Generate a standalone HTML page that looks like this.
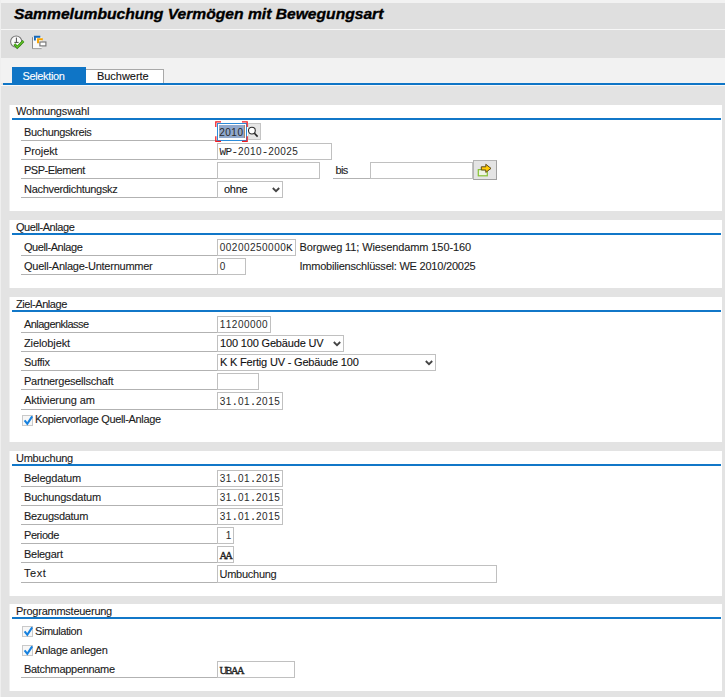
<!DOCTYPE html>
<html><head><meta charset="utf-8"><title>Sammelumbuchung</title>
<style>
*{box-sizing:border-box;margin:0;padding:0}
html,body{width:725px;height:697px;overflow:hidden}
body{position:relative;background:#e3e3e3;font-family:"Liberation Sans",sans-serif;font-size:11px;color:#1c1c1c;-webkit-text-stroke-width:0.1px}
.abs{position:absolute}
#topband{left:0;top:0;width:725px;height:3px;background:#f2f2f2}
#titlebar{left:0;top:3px;width:725px;height:26px;background:#dfdfdf}
#title{left:14.3px;top:6px;font:italic bold 14.5px "Liberation Sans",sans-serif;color:#000;-webkit-text-stroke:0.35px #000;white-space:nowrap;transform-origin:0 0;transform:scaleX(1.078)}
#sep{left:0;top:29px;width:725px;height:1px;background:#f7f7f7}
#toolbar{left:0;top:30px;width:725px;height:28px;background:#dedede}
#tabarea{left:0;top:58px;width:725px;height:25px;background:#f2f2f2}
#leftband{left:0;top:0;width:1px;height:697px;background:#efefef}
#tab1{left:12px;top:67px;width:74px;height:16px;background:#0f75c6;color:#fff;padding-left:10.5px;line-height:19px;white-space:nowrap}
#tab2{left:86px;top:69px;width:78px;height:14px;background:#fff;border-top:1px solid #a9a9a9;border-right:1px solid #a9a9a9;padding-left:11px;line-height:12.5px;color:#111;white-space:nowrap}
#tabline{left:3px;top:83px;width:722px;height:2px;background:#0f75c6}
.box{position:absolute;background:#fff;left:10px;width:712px;box-shadow:-1px 0 0 #f0f0f0}
.hd{position:absolute;left:6px;top:0;line-height:14px;white-space:nowrap}
.bl{position:absolute;left:1.5px;right:1.5px;top:13px;height:2px;background:#1177c8}
.lbl{position:absolute;left:21px;width:196px;height:19px;border-bottom:1px solid #b2b2b2;padding-left:3px;line-height:21.8px;white-space:nowrap;overflow:hidden}
.fld{position:absolute;left:217px;height:17px;border:1px solid #c0c0c0;background:#fff;font:11px "Liberation Mono",monospace;letter-spacing:-0.55px;padding-left:1.5px;line-height:17px;white-space:pre;color:#222;overflow:hidden;-webkit-text-stroke-width:0}
.fld.s{font:11px "Liberation Sans",sans-serif;letter-spacing:0;line-height:15.6px;-webkit-text-stroke-width:0.1px;color:#1c1c1c}
.sel{position:absolute;left:217px;height:17px;border:1px solid #c0c0c0;background:#fff;padding-left:2px;line-height:15.6px;white-space:nowrap;color:#111}
.sel svg{position:absolute;right:2px;top:4.5px}
.m{}
.d{display:inline-block;width:6.05px;text-align:center;font:normal 10px "Liberation Sans",sans-serif;letter-spacing:0;color:#2a2a2a}
.cs{display:inline-block;position:relative;top:0.6px;width:5.8px;text-align:center;font:normal 10.5px "Liberation Serif",serif;letter-spacing:0;-webkit-text-stroke:0.35px #222}
.txt{position:absolute;white-space:nowrap;line-height:21.8px;height:19px}
.cb{position:absolute;left:22px;width:11px;height:11px;border:1px solid #c9c9c9;background:#f7f7f7}
.cb svg{position:absolute;left:0;top:-1px}
</style></head><body>
<div id="topband" class="abs"></div>
<div id="titlebar" class="abs"></div>
<div id="sep" class="abs"></div>
<div id="toolbar" class="abs"></div>
<div id="tabarea" class="abs"></div>
<div id="leftband" class="abs"></div>
<div id="title" class="abs">Sammelumbuchung Vermögen mit Bewegungsart</div>

<div id="tab1" class="abs"><span style="letter-spacing:-0.363px;">Selektion</span></div>
<div id="tab2" class="abs"><span style="letter-spacing:-0.043px;">Buchwerte</span></div>
<div id="tabline" class="abs"></div><div class="abs" style="left:1px;top:85px;width:724px;height:1px;background:#f8f8f8"></div>
<svg class="abs" style="left:8px;top:33px" width="20" height="18" viewBox="0 0 20 18">
<circle cx="8.2" cy="8.6" r="5.6" fill="#fafafa" stroke="#767676" stroke-width="1.05"/>
<path d="M8.4 4.6V9.4M6.4 9.4H10.6" stroke="#4a4a4a" stroke-width="1" fill="none"/>
<path d="M6.4 11.1L9.2 14.3L15.4 8" stroke="#2f7d10" stroke-width="2.6" fill="none"/>
<path d="M6.4 11.1L9.2 14.3L15.4 8" stroke="#5fc326" stroke-width="1.3" fill="none"/>
</svg>
<svg class="abs" style="left:30px;top:34px" width="18" height="16" viewBox="0 0 18 16">
<path d="M2.5 3.2V14.6H11.6" fill="none" stroke="#8a8a8a" stroke-width="1"/>
<rect x="3" y="3.2" width="8.6" height="11" fill="#fafafa"/>
<path d="M4.9 6.4V2.7H10.3" fill="none" stroke="#1668b8" stroke-width="1.9"/>
<path d="M8 9.2V5.3H12.8" fill="none" stroke="#f5a200" stroke-width="1.9"/>
<rect x="9.9" y="8" width="6" height="3.9" fill="#fff" stroke="#757575" stroke-width="1.15"/>
</svg>
<div class="box" style="top:105px;height:106px"><div class="hd" style="top:-1px"><span style="letter-spacing:-0.151px;">Wohnungswahl</span></div><div class="bl"></div></div>
<div class="lbl" style="top:122px;height:19px"><span style="letter-spacing:-0.358px;">Buchungskreis</span></div>
<div class="lbl" style="top:141px;height:19px"><span style="letter-spacing:-0.107px;">Projekt</span></div>
<div class="lbl" style="top:160px;height:19px"><span style="letter-spacing:-0.476px;">PSP-Element</span></div>
<div class="lbl" style="top:179px;height:19px"><span style="letter-spacing:-0.309px;">Nachverdichtungskz</span></div>
<div class="box" style="top:220px;height:68px"><div class="hd" style="top:0px"><span style="letter-spacing:-0.441px;">Quell-Anlage</span></div><div class="bl"></div></div>
<div class="lbl" style="top:237px;height:19px"><span style="letter-spacing:-0.441px;">Quell-Anlage</span></div>
<div class="lbl" style="top:256px;height:19px"><span style="letter-spacing:-0.25px;">Quell-Anlage-Unternummer</span></div>
<div class="box" style="top:297px;height:145px"><div class="hd" style="top:0px"><span style="letter-spacing:-0.431px;">Ziel-Anlage</span></div><div class="bl"></div></div>
<div class="lbl" style="top:314px;height:19px"><span style="letter-spacing:-0.543px;">Anlagenklasse</span></div>
<div class="lbl" style="top:333px;height:19px"><span style="letter-spacing:-0.108px;">Zielobjekt</span></div>
<div class="lbl" style="top:352px;height:19px"><span style="letter-spacing:-0.285px;">Suffix</span></div>
<div class="lbl" style="top:371px;height:19px"><span style="letter-spacing:-0.256px;">Partnergesellschaft</span></div>
<div class="lbl" style="top:390px;height:20px"><span style="letter-spacing:-0.148px;">Aktivierung am</span></div>
<div class="box" style="top:451px;height:145px"><div class="hd" style="top:0px"><span style="letter-spacing:-0.259px;">Umbuchung</span></div><div class="bl"></div></div>
<div class="lbl" style="top:468px;height:19px"><span style="letter-spacing:-0.172px;">Belegdatum</span></div>
<div class="lbl" style="top:487px;height:19px"><span style="letter-spacing:-0.192px;">Buchungsdatum</span></div>
<div class="lbl" style="top:506px;height:19px"><span style="letter-spacing:-0.297px;">Bezugsdatum</span></div>
<div class="lbl" style="top:525px;height:19px"><span style="letter-spacing:-0.417px;">Periode</span></div>
<div class="lbl" style="top:544px;height:19px"><span style="letter-spacing:-0.286px;">Belegart</span></div>
<div class="lbl" style="top:563px;height:20px"><span style="letter-spacing:0.528px;">Text</span></div>
<div class="box" style="top:604px;height:87px"><div class="hd" style="top:0px"><span style="letter-spacing:-0.252px;">Programmsteuerung</span></div><div class="bl"></div></div>
<div class="lbl" style="top:659px;height:19px"><span style="letter-spacing:-0.307px;">Batchmappenname</span></div>
<div class="abs" style="left:216.5px;top:123px;width:30.5px;height:18px;border:1.5px solid #2c8bd9;background:#fff"></div>
<div class="abs" style="left:218.5px;top:124.7px;width:26px;height:13.5px;background:#90a8cc"></div>
<div class="abs" style="left:244px;top:124.7px;width:1px;height:13.5px;background:#a98a6a"></div>
<div class="abs" style="left:219px;top:124px;font:11px 'Liberation Mono',monospace;letter-spacing:-0.55px;line-height:18.4px;color:#111;white-space:pre;-webkit-text-stroke-width:0"><i class="d">2</i><i class="d">0</i><i class="d">1</i><i class="d">0</i></div>
<svg class="abs" style="left:213px;top:119px" width="38" height="26" viewBox="0 0 38 26"><path d="M2.8 8V2.9H8M29 2.9H34.2V8M34.2 17.2V22.3H29M8 22.3H2.8V17.2" fill="none" stroke="#f01c22" stroke-width="1.25"/></svg>
<div class="abs" style="left:248px;top:123px;width:13px;height:17px;background:#e6e6e6;border:1px solid #c4c4c4;border-left-color:#d8d8d8"></div>
<svg class="abs" style="left:247px;top:125px" width="13" height="14" viewBox="0 0 13 14"><circle cx="4.9" cy="5.6" r="3.4" fill="#fff" stroke="#2a2a2a" stroke-width="1.1"/><path d="M7.4 8.2L10.6 11.6" stroke="#222" stroke-width="1.6"/></svg>

<div class="fld " style="top:143px;width:115px;">WP-<i class="d">2</i><i class="d">0</i><i class="d">1</i><i class="d">0</i>-<i class="d">2</i><i class="d">0</i><i class="d">0</i><i class="d">2</i><i class="d">5</i></div>
<div class="fld " style="top:162px;width:103px;"></div>
<div class="txt" style="left:333px;top:160px;width:37px;border-bottom:1px solid #b2b2b2;padding-left:2.6px"><span style="letter-spacing:-0.688px;">bis</span></div>
<div class="fld " style="top:162px;width:103px;left:370px"></div>
<div class="abs" style="left:473px;top:160px;width:24px;height:20px;background:#e4e4e4;border:1px solid #b4b4b4;border-bottom-color:#a0a0a0;border-right-color:#a0a0a0"></div>
<svg class="abs" style="left:476px;top:162px" width="18" height="16" viewBox="0 0 18 16">
<rect x="2.3" y="7.6" width="9" height="6.2" fill="#eef4e4" stroke="#86c232" stroke-width="1.2"/>
<path d="M5.3 4.8H9.8V2.3L15 6.4L9.8 10.4V8H5.3Z" fill="#ffcb05" stroke="#5b4a1a" stroke-width="1"/>
</svg>
<div class="sel" style="top:181px;width:66px;padding-left:6px"><span style="letter-spacing:-0.246px;">ohne</span><svg width="8" height="6" viewBox="0 0 8 6"><path d="M0.8 1L4 4.2L7.2 1" fill="none" stroke="#444" stroke-width="1.8"/></svg></div>
<div class="fld " style="top:239px;width:79px;"><i class="d">0</i><i class="d">0</i><i class="d">2</i><i class="d">0</i><i class="d">0</i><i class="d">2</i><i class="d">5</i><i class="d">0</i><i class="d">0</i><i class="d">0</i><i class="d">0</i>K</div>
<div class="fld " style="top:258px;width:29px;"><i class="d">0</i></div>
<div class="txt" style="left:299.5px;top:237px"><span style="letter-spacing:-0.106px;">Borgweg 11; Wiesendamm 150-160</span></div>
<div class="txt" style="left:299.5px;top:256px"><span style="letter-spacing:-0.219px;">Immobilienschlüssel: WE 2010/20025</span></div>
<div class="fld " style="top:316px;width:54px;"><i class="d">1</i><i class="d">1</i><i class="d">2</i><i class="d">0</i><i class="d">0</i><i class="d">0</i><i class="d">0</i><i class="d">0</i></div>
<div class="sel" style="top:335px;width:127px;padding-left:2px"><span style="letter-spacing:-0.162px;">100 100 Gebäude UV</span><svg width="8" height="6" viewBox="0 0 8 6"><path d="M0.8 1L4 4.2L7.2 1" fill="none" stroke="#444" stroke-width="1.8"/></svg></div>
<div class="sel" style="top:354px;width:219px;padding-left:2px"><span style="letter-spacing:-0.188px;">K K Fertig UV - Gebäude 100</span><svg width="8" height="6" viewBox="0 0 8 6"><path d="M0.8 1L4 4.2L7.2 1" fill="none" stroke="#444" stroke-width="1.8"/></svg></div>
<div class="fld " style="top:373px;width:42px;"></div>
<div class="fld " style="top:392px;width:66px;height:18px;line-height:18px"><i class="d">3</i><i class="d">1</i>.<i class="d">0</i><i class="d">1</i>.<i class="d">2</i><i class="d">0</i><i class="d">1</i><i class="d">5</i></div>
<div class="cb" style="top:415px"><svg width="11" height="11" viewBox="0 0 11 11"><path d="M1.6 5.4L4.3 8.8L9.2 1.4" fill="none" stroke="#1781de" stroke-width="2.1"/></svg></div><div class="txt" style="left:35px;top:409px"><span style="letter-spacing:-0.336px;">Kopiervorlage Quell-Anlage</span></div>
<div class="fld " style="top:470px;width:66px;"><i class="d">3</i><i class="d">1</i>.<i class="d">0</i><i class="d">1</i>.<i class="d">2</i><i class="d">0</i><i class="d">1</i><i class="d">5</i></div>
<div class="fld " style="top:489px;width:66px;"><i class="d">3</i><i class="d">1</i>.<i class="d">0</i><i class="d">1</i>.<i class="d">2</i><i class="d">0</i><i class="d">1</i><i class="d">5</i></div>
<div class="fld " style="top:508px;width:66px;"><i class="d">3</i><i class="d">1</i>.<i class="d">0</i><i class="d">1</i>.<i class="d">2</i><i class="d">0</i><i class="d">1</i><i class="d">5</i></div>
<div class="fld " style="top:527px;width:17px;"> <i class="d">1</i></div>
<div class="fld " style="top:546px;width:17px;"><i class="cs">A</i><i class="cs">A</i></div>
<div class="fld s" style="top:565px;width:280px;height:18px;line-height:16.6px"><span style="letter-spacing:-0.259px;">Umbuchung</span></div>
<div class="cb" style="top:626px"><svg width="11" height="11" viewBox="0 0 11 11"><path d="M1.6 5.4L4.3 8.8L9.2 1.4" fill="none" stroke="#1781de" stroke-width="2.1"/></svg></div><div class="txt" style="left:35px;top:621px"><span style="letter-spacing:-0.446px;">Simulation</span></div>
<div class="cb" style="top:645px"><svg width="11" height="11" viewBox="0 0 11 11"><path d="M1.6 5.4L4.3 8.8L9.2 1.4" fill="none" stroke="#1781de" stroke-width="2.1"/></svg></div><div class="txt" style="left:35px;top:640px"><span style="letter-spacing:-0.283px;">Anlage anlegen</span></div>
<div class="fld " style="top:661px;width:78px;"><i class="cs">U</i><i class="cs">B</i><i class="cs">A</i><i class="cs">A</i></div>
</body></html>
